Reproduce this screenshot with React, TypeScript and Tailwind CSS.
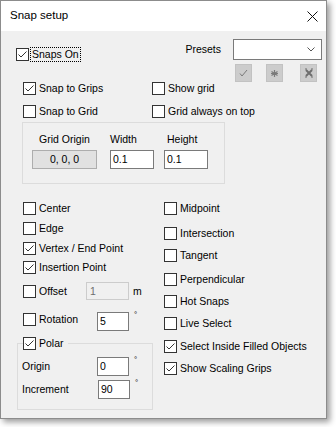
import React from 'react';

const Box = ({ checked = false }: { checked?: boolean }) => (
  <span className="w-[13px] h-[13px] border border-[#333] bg-white flex items-center justify-center shrink-0">
    {checked && (
      <svg width="11" height="11" viewBox="0 0 11 11">
        <path d="M1.5 5.5 L4 8 L9.5 2.5" stroke="#333" fill="none" strokeWidth="1" />
      </svg>
    )}
  </span>
);

const Check = ({ label, checked = false, className = '' }: { label: string; checked?: boolean; className?: string }) => (
  <div className={`flex items-center h-[13px] gap-[3px] ${className}`}>
    <Box checked={checked} />
    <span className="leading-none whitespace-nowrap">{label}</span>
  </div>
);

const Field = ({ value, className = '' }: { value: string; className?: string }) => (
  <div className={`h-[19px] bg-white border border-[#7a7a7a] flex items-center pl-[2px] leading-none ${className}`}>
    {value}
  </div>
);

const Deg = () => <span className="ml-[5px] self-start mt-[-1px] text-[8px] leading-none">°</span>;

const ToolButton = ({ children, className = '' }: { children: React.ReactNode; className?: string }) => (
  <div className={`w-[17px] h-[18px] bg-[#cccccc] border border-[#c2c2c2] flex items-center justify-center ${className}`}>
    {children}
  </div>
);

const App = () => {
  return (
    <div className="w-[336px] h-[427px] bg-white font-['Liberation_Sans',Arial,sans-serif] text-[10.5px] text-black">
      <div className="w-[327px] h-[419px] border border-[#8c8c8c] bg-[#f0f0f0] shadow-[3px_3px_6px_0_rgba(0,0,0,0.4)] flex flex-col">
        {/* title bar */}
        <div className="h-[30px] bg-white flex items-center justify-between pl-[9px] pr-[8px] shrink-0">
          <span className="text-[11.5px]">Snap setup</span>
          <svg width="11" height="11" viewBox="0 0 11 11">
            <path d="M0.5 0.5 L10.5 10.5 M10.5 0.5 L0.5 10.5" stroke="#111" strokeWidth="1" />
          </svg>
        </div>

        <div className="flex-1 pt-[8px]">
          {/* snaps on + presets */}
          <div className="flex justify-between h-[43px]">
            <div className="ml-[15px] mt-[9px] flex items-center h-[13px] gap-[1px]">
              <Box checked />
              <span className="h-[15px] flex items-center px-[1px] border border-dotted border-black leading-none">Snaps On</span>
            </div>
            <div className="mr-[4px] flex flex-col items-end">
              <div className="flex items-center gap-[12px]">
                <span>Presets</span>
                <div className="w-[89px] h-[21px] bg-white border border-[#7a7a7a] flex items-center justify-end pr-[6px]">
                  <svg width="8" height="5" viewBox="0 0 8 5">
                    <path d="M0.5 0.5 L4 4 L7.5 0.5" stroke="#555" fill="none" strokeWidth="1" />
                  </svg>
                </div>
              </div>
              <div className="w-[89px] flex mt-[4px]">
                <ToolButton className="ml-[2px]">
                  <svg width="9" height="8" viewBox="0 0 9 8">
                    <path d="M1 4.5 L3 7 L8 1" stroke="#7a7a7a" fill="none" strokeWidth="1" />
                  </svg>
                </ToolButton>
                <ToolButton className="ml-[14px]">
                  <svg width="9" height="9" viewBox="0 0 9 9">
                    <path d="M4.5 1 V8 M1.5 2.5 L7.5 6.5 M7.5 2.5 L1.5 6.5 M1 4.5 H8" stroke="#7a7a7a" strokeWidth="1.2" />
                  </svg>
                </ToolButton>
                <ToolButton className="ml-[17px]">
                  <svg width="10" height="10" viewBox="0 0 10 10">
                    <path d="M2 2 L8 8 M8 2 L2 8" stroke="#6e6e6e" strokeWidth="2" />
                    <path d="M1 1 H3 M7 1 H9 M1 9 H3 M7 9 H9" stroke="#6e6e6e" strokeWidth="1" />
                  </svg>
                </ToolButton>
              </div>
            </div>
          </div>

          {/* grip/grid options */}
          <div className="grid grid-cols-[129px_auto] gap-y-[10px] ml-[22px]">
            <Check label="Snap to Grips" checked />
            <Check label="Show grid" />
            <Check label="Snap to Grid" />
            <Check label="Grid always on top" />
          </div>

          {/* grid group */}
          <div className="ml-[21px] mt-[4px] w-[203px] h-[62px] border border-[#dcdcdc] pt-[10px] pl-[9px] flex">
            <div className="flex flex-col w-[65px]">
              <span className="h-[12px] leading-[12px] text-center">Grid Origin</span>
              <div className="mt-[5px] h-[19px] bg-[#e1e1e1] border border-[#adadad] flex items-center justify-center leading-none">0, 0, 0</div>
            </div>
            <div className="flex flex-col w-[44px] ml-[13px]">
              <span className="h-[12px] leading-[12px]">Width</span>
              <Field value="0.1" className="mt-[5px]" />
            </div>
            <div className="flex flex-col w-[44px] ml-[10px]">
              <span className="h-[12px] leading-[12px] pl-[3px]">Height</span>
              <Field value="0.1" className="mt-[5px]" />
            </div>
          </div>

          {/* snap modes */}
          <div className="flex ml-[22px] mt-[18px]">
            <div className="w-[141px] flex flex-col">
              <Check label="Center" />
              <Check label="Edge" className="mt-[7px]" />
              <Check label="Vertex / End Point" checked className="mt-[7px]" />
              <Check label="Insertion Point" checked className="mt-[6px]" />
              <div className="flex items-center h-[18px] mt-[8px]">
                <Box />
                <span className="ml-[3px] w-[47px] leading-none">Offset</span>
                <div className="w-[43px] h-[18px] bg-[#f0f0f0] border border-[#cccccc] flex items-center pl-[3px] text-[#6d6d6d] leading-none">1</div>
                <span className="ml-[4px] leading-none">m</span>
              </div>
              <div className="flex items-start h-[19px] mt-[12px]">
                <div className="mt-[1px] flex items-center h-[13px]">
                  <Box />
                  <span className="ml-[3px] w-[58px] leading-none">Rotation</span>
                </div>
                <Field value="5" className="w-[32px]" />
                <Deg />
              </div>
              <fieldset className="ml-[-6px] mt-[6px] w-[136px] border border-[#dcdcdc] px-[4px] pb-[10px]">
                <legend className="ml-[1px] pr-[4px]">
                  <span className="flex items-center h-[13px] gap-[3px]">
                    <Box checked />
                    <span className="leading-none">Polar</span>
                  </span>
                </legend>
                <div className="flex items-center h-[19px] mt-[7px]">
                  <span className="w-[75px] leading-none">Origin</span>
                  <Field value="0" className="w-[32px]" />
                  <Deg />
                </div>
                <div className="flex items-center h-[19px] mt-[4px]">
                  <span className="w-[76px] leading-none">Increment</span>
                  <Field value="90" className="w-[32px]" />
                  <Deg />
                </div>
              </fieldset>
            </div>
            <div className="flex flex-col">
              <Check label="Midpoint" />
              <Check label="Intersection" className="mt-[12px]" />
              <Check label="Tangent" className="mt-[9px]" />
              <Check label="Perpendicular" className="mt-[11px]" />
              <Check label="Hot Snaps" className="mt-[9px]" />
              <Check label="Live Select" className="mt-[9px]" />
              <Check label="Select Inside Filled Objects" checked className="mt-[10px]" />
              <Check label="Show Scaling Grips" checked className="mt-[9px]" />
            </div>
          </div>
        </div>
      </div>
    </div>
  );
};

export default App;
